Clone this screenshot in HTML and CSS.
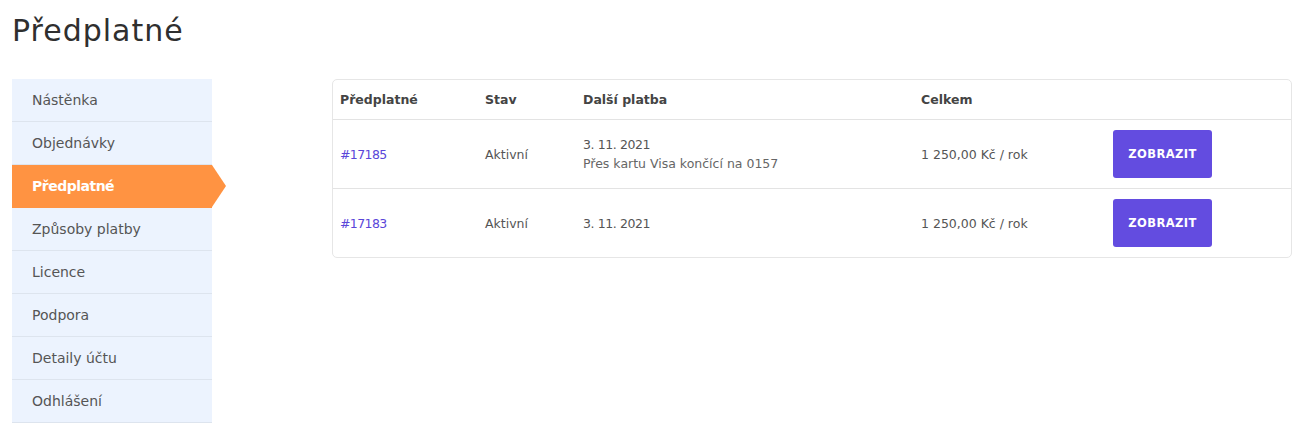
FILE: index.html
```html
<!DOCTYPE html>
<html lang="cs">
<head>
<meta charset="utf-8">
<title>Předplatné</title>
<link rel="stylesheet" href="styles.css">
</head>
<body>
<h1 class="title">Předplatné</h1>
<div class="layout">
  <nav class="menu">
    <a class="menu-item" href="#">Nástěnka</a>
    <a class="menu-item" href="#">Objednávky</a>
    <a class="menu-item active" href="#">Předplatné</a>
    <a class="menu-item" href="#">Způsoby platby</a>
    <a class="menu-item" href="#">Licence</a>
    <a class="menu-item" href="#">Podpora</a>
    <a class="menu-item" href="#">Detaily účtu</a>
    <a class="menu-item" href="#">Odhlášení</a>
  </nav>
  <div class="content">
    <table class="subs">
      <thead>
        <tr>
          <th class="c1">Předplatné</th>
          <th class="c2">Stav</th>
          <th class="c3">Další platba</th>
          <th class="c4">Celkem</th>
          <th class="c5"></th>
        </tr>
      </thead>
      <tbody>
        <tr class="first">
          <td><a class="num" href="#">#17185</a></td>
          <td>Aktivní</td>
          <td><span class="date">3. 11. 2021</span><br><span class="via">Přes kartu Visa končící na 0157</span></td>
          <td>1 250,00 Kč / rok</td>
          <td><a class="btn" href="#">Zobrazit</a></td>
        </tr>
        <tr>
          <td><a class="num" href="#">#17183</a></td>
          <td>Aktivní</td>
          <td><span class="date">3. 11. 2021</span></td>
          <td>1 250,00 Kč / rok</td>
          <td><a class="btn" href="#">Zobrazit</a></td>
        </tr>
      </tbody>
    </table>
  </div>
</div>
</body>
</html>
```
FILE: styles.css
```css
* { box-sizing: border-box; }
body {
  margin: 0;
  padding: 0 12px;
  font-family: "DejaVu Sans", "Open Sans", sans-serif;
  color: #515151;
  background: #fff;
}
.title {
  margin: 0;
  padding-top: 11px;
  height: 79px;
  font-size: 30px;
  line-height: 40px;
  font-weight: normal;
  color: #2f2f2f;
  letter-spacing: 1px;
}
.layout {
  display: flex;
  gap: 120px;
  align-items: flex-start;
}
.menu {
  width: 200px;
  flex: none;
  display: flex;
  flex-direction: column;
}
.menu-item {
  position: relative;
  display: flex;
  align-items: center;
  height: 43px;
  padding: 0 20px;
  background: #ecf3fe;
  border-bottom: 1px solid #dde4ee;
  color: #555;
  font-size: 14px;
  text-decoration: none;
}
.menu-item.active {
  background: #ff9342;
  color: #fff;
  font-weight: bold;
  letter-spacing: -0.5px;
  border-bottom-color: #ff9342;
}
.menu-item.active::after {
  content: "";
  position: absolute;
  left: 100%;
  top: 0;
  border-style: solid;
  border-width: 21.5px 0 21.5px 14px;
  border-color: transparent transparent transparent #ff9342;
}
.content {
  flex: 1;
  padding-right: 2px;
}
.subs {
  width: 100%;
  border-collapse: separate;
  border-spacing: 0;
  border: 1px solid #e6e6e6;
  border-radius: 5px;
  font-size: 12.5px;
}
.subs th {
  text-align: left;
  font-weight: bold;
  color: #444;
  height: 40px;
  padding: 0 7px;
  border-bottom: 1px solid #e3e3e3;
}
.subs td {
  height: 68px;
  padding: 0 7px;
  vertical-align: middle;
  line-height: 19px;
  color: #555;
}
.subs tr.first td { height: 69px; border-bottom: 1px solid #e3e3e3; }
.c1 { width: 145px; }
.c2 { width: 98px; }
.c3 { width: 338px; }
.c4 { width: 192px; }
.num { color: #5a46d9; text-decoration: none; letter-spacing: -0.6px; }
.date { letter-spacing: -0.4px; }
.via { color: #666; }
.btn {
  display: inline-flex;
  align-items: center;
  justify-content: center;
  width: 99px;
  height: 48px;
  background: #634ce0;
  border-radius: 3px;
  color: #fff;
  font-weight: bold;
  font-size: 11.5px;
  letter-spacing: 0.4px;
  text-transform: uppercase;
  text-decoration: none;
}
```
